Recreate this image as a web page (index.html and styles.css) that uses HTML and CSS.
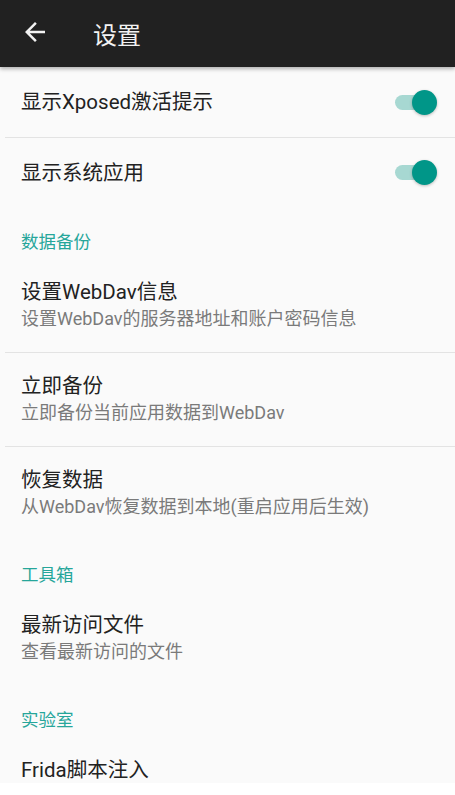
FILE: index.html
```html
<!DOCTYPE html>
<html lang="zh-CN">
<head>
  <meta charset="UTF-8">
  <link rel="stylesheet" href="styles.css">
</head>
<body>
  <div class="toolbar">
    <svg class="back" viewBox="0 0 24 24" width="30" height="30">
      <path d="M20 11H7.83l5.59-5.59L12 4l-8 8 8 8 1.41-1.41L7.83 13H20v-2z" fill="#f2f2f2"/>
    </svg>
    <span class="toolbar-title">设置</span>
  </div>

  <div class="list">
    <div class="pref switch-pref">
      <span class="pref-title">显示Xposed激活提示</span>
      <span class="switch"><span class="thumb"></span></span>
    </div>
    <div class="pref switch-pref">
      <span class="pref-title">显示系统应用</span>
      <span class="switch"><span class="thumb"></span></span>
    </div>

    <div class="category">数据备份</div>
    <div class="pref">
      <div class="pref-title">设置WebDav信息</div>
      <div class="pref-summary">设置WebDav的服务器地址和账户密码信息</div>
    </div>
    <div class="pref">
      <div class="pref-title">立即备份</div>
      <div class="pref-summary">立即备份当前应用数据到WebDav</div>
    </div>
    <div class="pref">
      <div class="pref-title">恢复数据</div>
      <div class="pref-summary">从WebDav恢复数据到本地(重启应用后生效)</div>
    </div>

    <div class="category">工具箱</div>
    <div class="pref">
      <div class="pref-title">最新访问文件</div>
      <div class="pref-summary">查看最新访问的文件</div>
    </div>

    <div class="category">实验室</div>
    <div class="pref">
      <div class="pref-title">Frida脚本注入</div>
    </div>
  </div>
</body>
</html>
```

FILE: styles.css
```css
body {
  margin: 0;
  width: 455px;
  height: 795px;
  overflow: hidden;
  background-color: #fff;
  font-family: Roboto, "Noto Sans CJK SC", sans-serif;
}

.toolbar {
  height: 67px;
  display: flex;
  align-items: center;
  background-color: #212121;
  box-shadow: 0 2px 4px rgba(0,0,0,0.3);
  position: relative;
  z-index: 1;
}

.back {
  margin-left: 20px;
  margin-top: -3px;
}

.toolbar-title {
  margin-left: 43px;
  font-size: 24px;
  color: #f2f2f2;
}

.list {
  height: 716px;
  overflow: hidden;
  background-color: #fafafa;
}

.pref {
  margin-left: 5px;
  padding: 20px 18px 19px 16px;
}

.pref + .pref {
  border-top: 1px solid #e3e3e3;
}

.pref-title {
  font-size: 20.5px;
  line-height: 26px;
  color: #222;
}

.pref-summary {
  font-size: 18px;
  line-height: 28px;
  color: #7a7a7a;
}

.switch-pref {
  height: 70px;
  box-sizing: border-box;
  padding-top: 0;
  padding-bottom: 0;
  display: flex;
  align-items: center;
  justify-content: space-between;
}

.switch {
  position: relative;
  width: 42px;
  height: 25px;
}

.switch::before {
  content: '';
  position: absolute;
  left: 0;
  top: 5px;
  width: 36px;
  height: 15px;
  border-radius: 8px;
  background-color: #a7d8d2;
}

.thumb {
  position: absolute;
  right: 0;
  top: 0;
  width: 25px;
  height: 25px;
  border-radius: 50%;
  background-color: #009688;
  box-shadow: 0 1px 3px rgba(0,0,0,0.25);
}

.category {
  margin-left: 5px;
  height: 52px;
  box-sizing: border-box;
  padding: 24px 16px 0;
  font-size: 17.5px;
  line-height: 22px;
  color: #26a69a;
}
```
